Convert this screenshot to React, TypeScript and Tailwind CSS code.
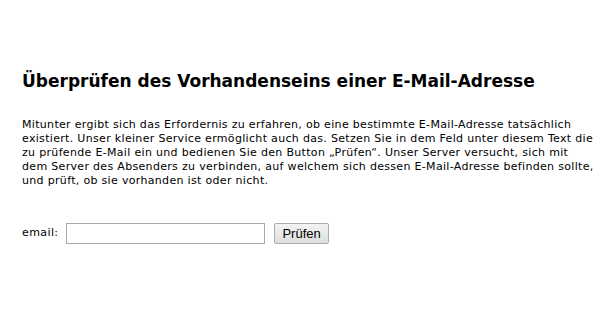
export default function App() {
  return (
    <div className="w-[609px] h-[319px] bg-white text-black font-['Verdana','DejaVu_Sans',sans-serif] px-[22px] pt-[70px]">
      <h1 className="text-[17px] leading-[22px] font-bold">
        Überprüfen des Vorhandenseins einer E-Mail-Adresse
      </h1>
      <p className="mt-[26px] text-[11px] leading-[14px] tracking-[0.32px] whitespace-nowrap">
        Mitunter ergibt sich das Erfordernis zu erfahren, ob eine bestimmte E-Mail-Adresse tatsächlich<br />
        existiert. Unser kleiner Service ermöglicht auch das. Setzen Sie in dem Feld unter diesem Text die<br />
        zu prüfende E-Mail ein und bedienen Sie den Button „Prüfen“. Unser Server versucht, sich mit<br />
        dem Server des Absenders zu verbinden, auf welchem sich dessen E-Mail-Adresse befinden sollte,<br />
        und prüft, ob sie vorhanden ist oder nicht.
      </p>
      <form className="mt-[35px] flex items-center text-[11px] tracking-[0.4px]" onSubmit={e => e.preventDefault()}>
        <label htmlFor="email">email:</label>
        <input
          id="email"
          type="text"
          className="ml-[8px] w-[199px] h-[21px] border border-[#a9a9a9] bg-white px-1 outline-none"
        />
        <button
          type="submit"
          className="ml-[9px] h-[21px] px-[7px] border border-[#adadad] rounded-[2px] bg-gradient-to-b from-[#f4f4f4] to-[#dedede] text-[13px] tracking-normal font-['Liberation_Sans',Arial,sans-serif] text-black"
        >
          Prüfen
        </button>
      </form>
    </div>
  )
}
